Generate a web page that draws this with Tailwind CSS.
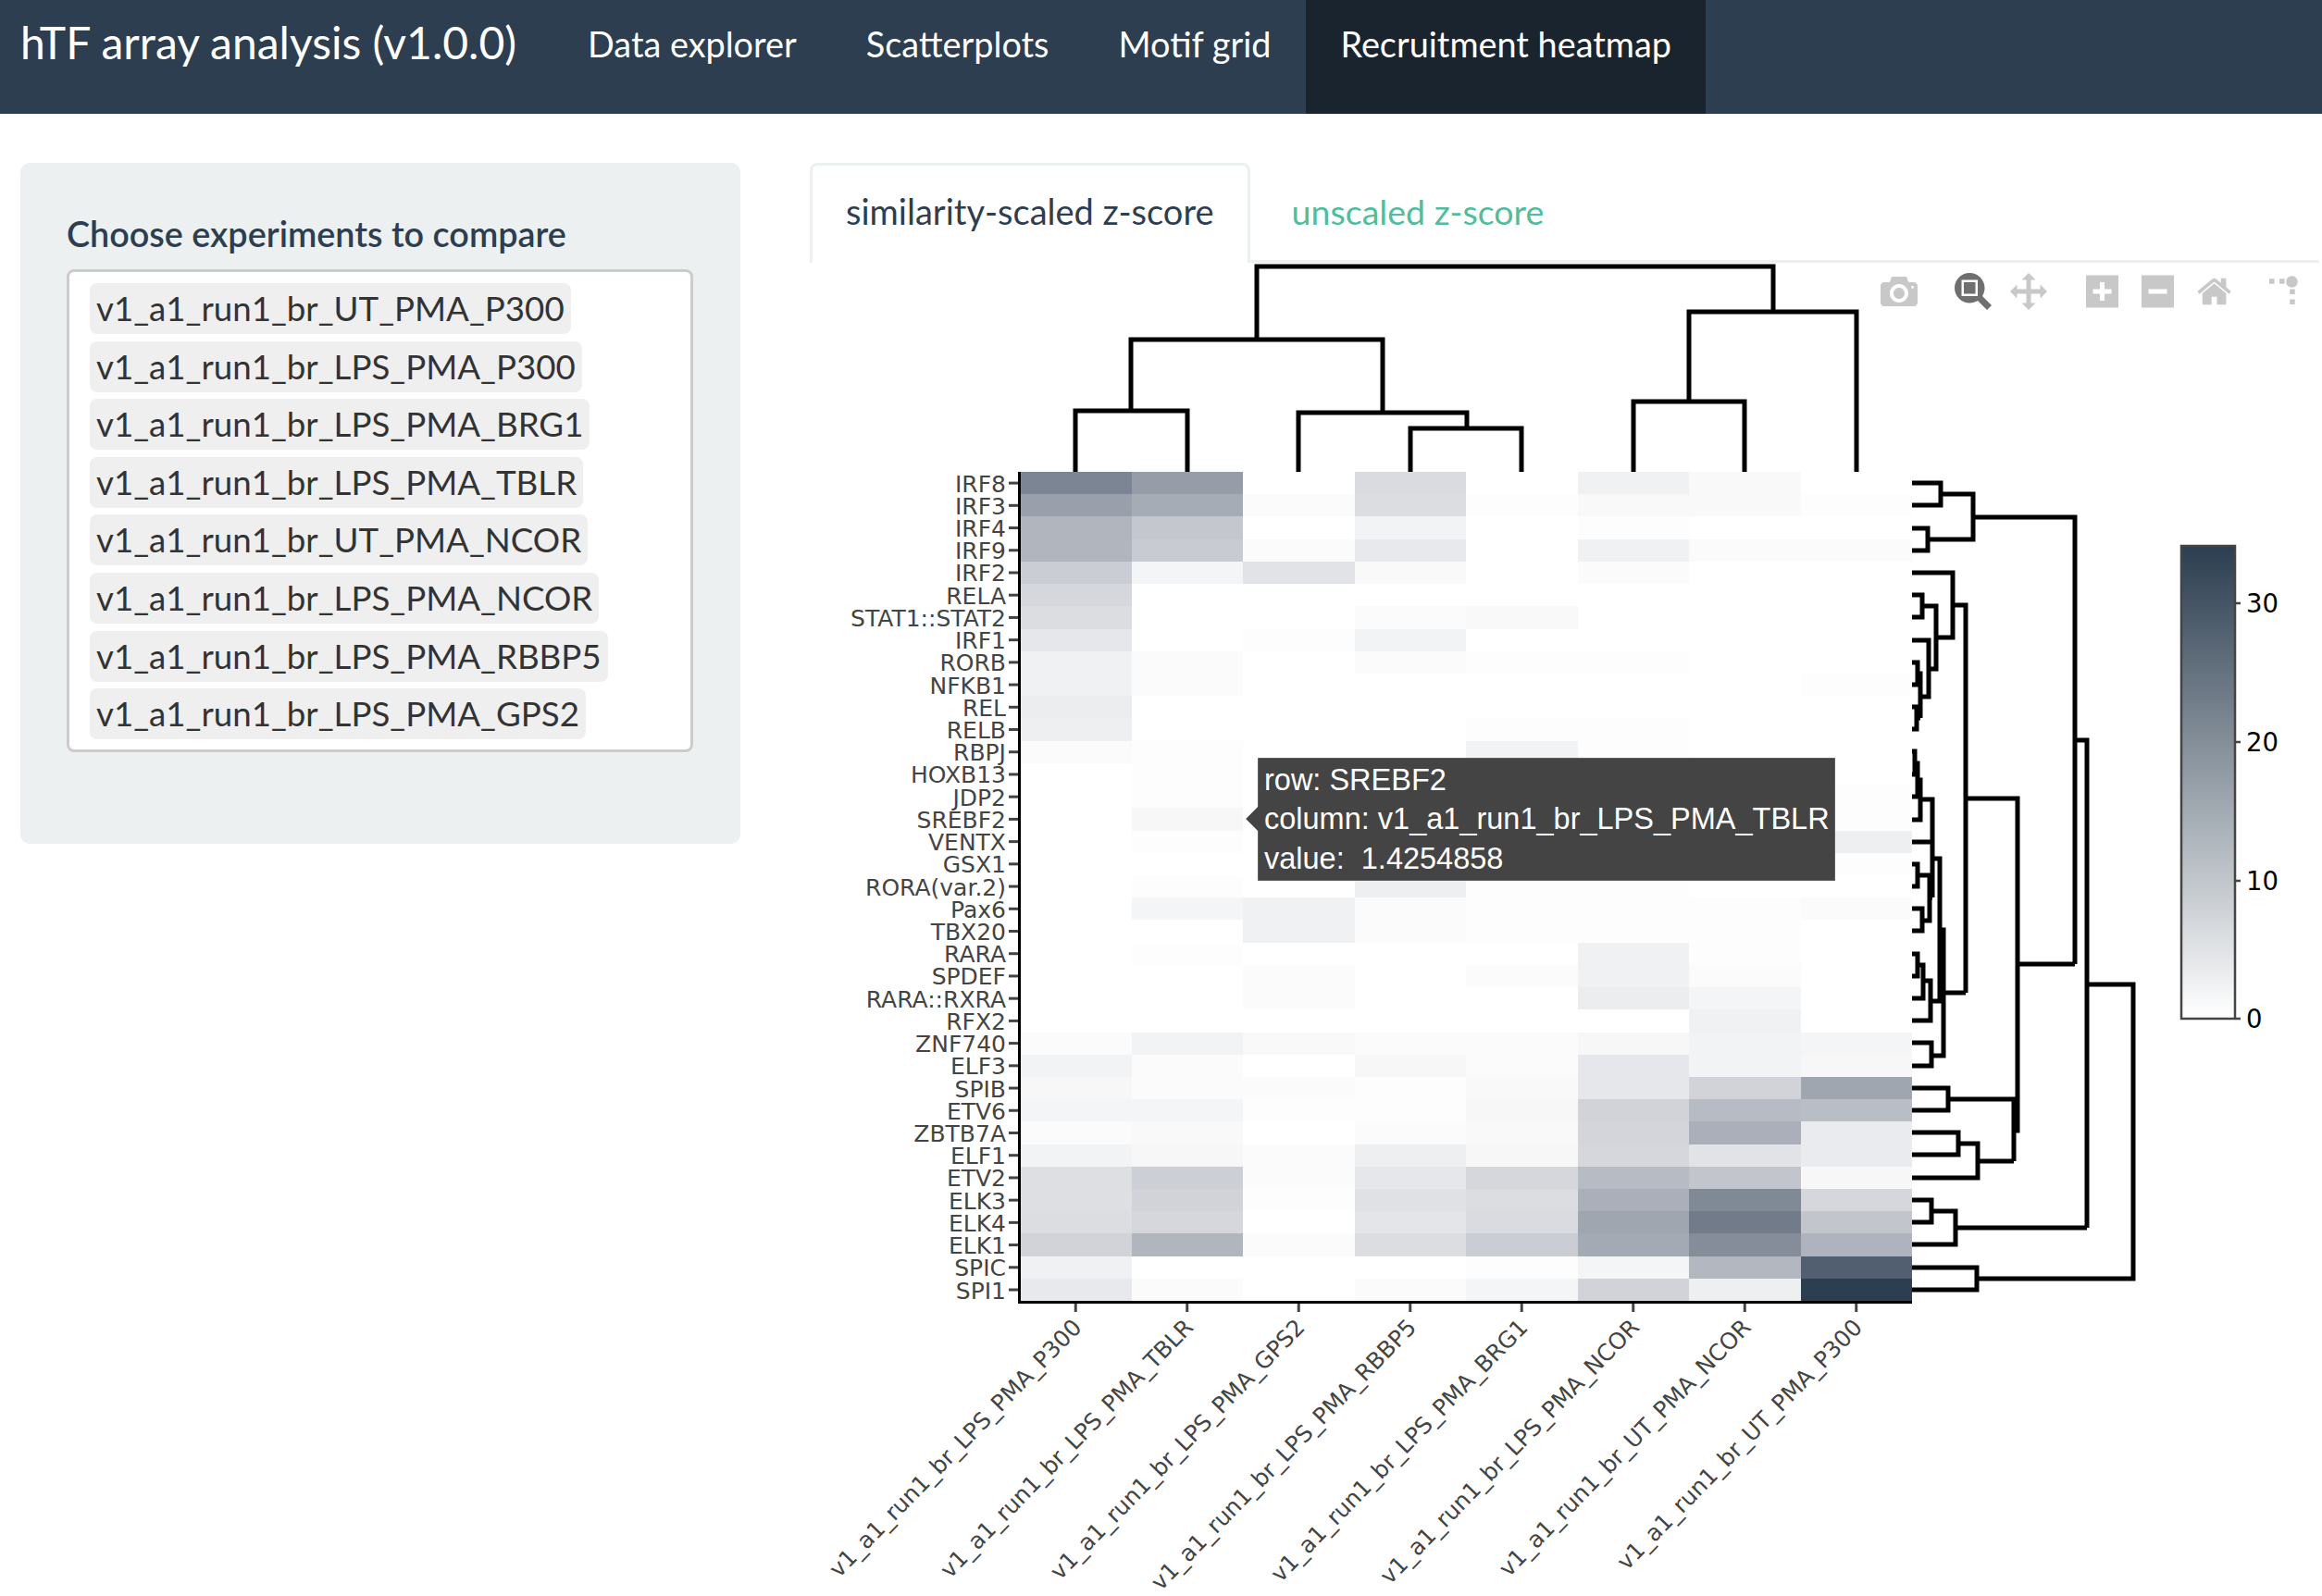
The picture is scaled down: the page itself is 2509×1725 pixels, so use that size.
<!DOCTYPE html>
<html lang="en">
<head>
    <meta charset="UTF-8">
    <meta name="viewport" content="width=device-width, initial-scale=1.0">
    <title>hTF array analysis</title>
    <script src="https://cdn.jsdelivr.net/npm/@tailwindcss/browser@4"></script>
</head>
<body class="h-screen overflow-hidden bg-white font-['Lato',sans-serif] text-[38px] leading-[53px] text-[#2c3e50]">
    <nav class="flex h-[123px] bg-[#2c3e50] text-[37.85px] text-white">
        <a class="pl-[22px] pr-[39.5px] pt-[18px] text-[48px] leading-[56px]">hTF array analysis (v1.0.0)</a>
        <a class="px-[37.5px] pt-[21px]">Data explorer</a>
        <a class="px-[37.5px] pt-[21px]">Scatterplots</a>
        <a class="px-[37.5px] pt-[21px]">Motif grid</a>
        <a class="bg-[#1a242f] px-[37.5px] pt-[21px]">Recruitment heatmap</a>
    </nav>

    <main class="flex pt-[53px]">
        <!-- sidebar -->
        <div class="ml-[22px] h-[736px] w-[778px] shrink-0 rounded-[10px] bg-[#ecf0f1] px-[50px] pt-[50px]">
            <p class="h-[65px] text-[37.75px] font-semibold">Choose experiments to compare</p>
            <div class="flex h-[522px] w-[677px] flex-col items-start gap-[7.6px] rounded-[8px] border-[3px] border-[#cccccc] bg-white pl-[22px] pt-[12px] text-[36.7px] text-[#333333]">
                <span class="h-[55px] rounded-[8px] bg-[#efefef] px-[7px] leading-[55px]">v1_a1_run1_br_UT_PMA_P300</span>
                <span class="h-[55px] rounded-[8px] bg-[#efefef] px-[7px] leading-[55px]">v1_a1_run1_br_LPS_PMA_P300</span>
                <span class="h-[55px] rounded-[8px] bg-[#efefef] px-[7px] leading-[55px]">v1_a1_run1_br_LPS_PMA_BRG1</span>
                <span class="h-[55px] rounded-[8px] bg-[#efefef] px-[7px] leading-[55px]">v1_a1_run1_br_LPS_PMA_TBLR</span>
                <span class="h-[55px] rounded-[8px] bg-[#efefef] px-[7px] leading-[55px]">v1_a1_run1_br_UT_PMA_NCOR</span>
                <span class="h-[55px] rounded-[8px] bg-[#efefef] px-[7px] leading-[55px]">v1_a1_run1_br_LPS_PMA_NCOR</span>
                <span class="h-[55px] rounded-[8px] bg-[#efefef] px-[7px] leading-[55px]">v1_a1_run1_br_LPS_PMA_RBBP5</span>
                <span class="h-[55px] rounded-[8px] bg-[#efefef] px-[7px] leading-[55px]">v1_a1_run1_br_LPS_PMA_GPS2</span>
            </div>
        </div>

        <!-- tabs + plot -->
        <div class="ml-[75px] w-[1634px] shrink-0">
            <div class="flex h-[108px] w-[1631px] border-b-[3px] border-[#ecf0f1]">
                <a class="-mb-[3px] h-[108px] rounded-t-[8px] border-x-[3px] border-t-[3px] border-[#ecf0f1] bg-white px-[36px] pt-[23px]">similarity-scaled z-score</a>
                <a class="px-[45px] pt-[26px] text-[37.6px] text-[#52bd9c]">unscaled z-score</a>
            </div>

            <!-- viewBox uses page coordinates -->
            <svg id="plot" class="block font-['DejaVu_Sans',sans-serif]" width="1634" height="1441" viewBox="875 284 1634 1441">
                <defs>
                    <linearGradient id="cb" x1="0" y1="0" x2="0" y2="1">
                        <stop offset="0" stop-color="#2c3e50"/>
                        <stop offset="1" stop-color="#ffffff"/>
                    </linearGradient>
                </defs>

                <g id="cells" shape-rendering="crispEdges"></g>

                <!-- axes -->
                <path d="M1101.5 510V1407.5H2066" fill="none" stroke="#000" stroke-width="3"/>
                <g id="xticks" stroke="#444" stroke-width="3"></g>
                <g id="yticks" stroke="#444" stroke-width="3"></g>
                <g id="ylabels" class="fill-[#444444] text-[25px]" text-anchor="end"></g>
                <g id="xlabels" class="fill-[#444444] text-[24.7px]" text-anchor="end"></g>

                <!-- column dendrogram -->
                <path fill="none" stroke="#000" stroke-width="5" d="M1358 367V288H1916V337
                    M1222 444V367H1494V446
                    M1162 510V444H1283V510
                    M1403 510V446H1585V463
                    M1524 510V463H1644V510
                    M1825 434V337H2006V510
                    M1765 510V434H1885V510"/>

                <!-- row dendrogram -->
                <path fill="none" stroke="#000" stroke-width="5" d="M2066 522H2097V546H2066
                    M2097 534H2132V583H2083
                    M2066 571H2083V595H2066
                    M2132 559H2242V1042
                    M2242 800H2255V1327
                    M2066 619H2110V689H2092
                    M2110 654H2124V1073
                    M2066 643H2077V667H2066
                    M2077 655H2092V723H2084
                    M2066 692H2084V753H2075
                    M2066 716H2072V740H2066
                    M2070 728H2075V776
                    M2066 764H2071V788H2066
                    M2071 776H2075
                    M2066 812H2069V837H2066
                    M2069 825H2072V861H2066
                    M2072 843H2075V864
                    M2066 886H2075V864H2088V970
                    M2066 910H2088
                    M2066 934H2072V958H2066
                    M2072 946H2085V995H2077
                    M2066 982H2077V1006H2066
                    M2085 970H2088
                    M2088 928H2096V1082H2086
                    M2096 1005H2100V1141H2087
                    M2066 1127H2087V1152H2066
                    M2100 1073H2124
                    M2066 1031H2072V1055H2066
                    M2072 1043H2078V1079H2066
                    M2078 1060H2086V1103H2066
                    M2066 1176H2105V1200H2066
                    M2105 1188H2176V1255
                    M2066 1224H2116V1248H2066
                    M2116 1236H2137V1273H2066
                    M2137 1255H2176
                    M2124 863H2180V1222H2176
                    M2180 1042H2242
                    M2066 1297H2087V1321H2066
                    M2087 1309H2113V1345H2066
                    M2113 1327H2255
                    M2255 1064H2305V1382H2136
                    M2066 1370H2136V1394H2066"/>

                <!-- colorbar -->
                <rect x="2357" y="590" width="58" height="511" fill="url(#cb)" stroke="#444" stroke-width="2.5"/>
                <path d="M2416 652H2421M2416 802H2421M2416 952H2421M2416 1101H2421" stroke="#444" stroke-width="2.5"/>
                <g class="fill-black text-[27.5px]">
                    <text x="2427" y="662">30</text>
                    <text x="2427" y="812">20</text>
                    <text x="2427" y="962">10</text>
                    <text x="2427" y="1111">0</text>
                </g>

                <!-- modebar -->
                <g fill="#c8c8c8">
                    <svg x="2032" y="295" width="40" height="40" viewBox="0 0 1000 1000"><path transform="matrix(1 0 0 -1 0 850)" d="m500 450c-83 0-150-67-150-150 0-83 67-150 150-150 83 0 150 67 150 150 0 83-67 150-150 150z m400 150h-120c-16 0-34 13-39 29l-31 93c-6 15-23 28-40 28h-340c-16 0-34-13-39-28l-31-94c-6-15-23-28-40-28h-120c-55 0-100-45-100-100v-450c0-55 45-100 100-100h800c55 0 100 45 100 100v450c0 55-45 100-100 100z m-400-550c-138 0-250 112-250 250 0 138 112 250 250 250 138 0 250-112 250-250 0-138-112-250-250-250z m365 380c-19 0-35 16-35 35 0 19 16 35 35 35 19 0 35-16 35-35 0-19-16-35-35-35z"/></svg>
                    <svg x="2112" y="295" width="40" height="40" viewBox="0 0 1000 1000"><path fill="#6f6f6f" transform="matrix(1 0 0 -1 0 850)" d="m1000-25l-250 251c40 63 63 138 63 218 0 224-182 406-407 406-224 0-406-182-406-406s183-406 407-406c80 0 155 22 218 62l250-250 125 125z m-812 250l0 438 437 0 0-438-437 0z m62 375l313 0 0-312-313 0 0 312z"/></svg>
                    <svg x="2172" y="295" width="40" height="40" viewBox="0 0 1000 1000"><path transform="matrix(1 0 0 -1 0 850)" d="m1000 350l-187 188 0-125-250 0 0 250 125 0-188 187-187-187 125 0 0-250-250 0 0 125-188-188 186-187 0 125 252 0 0-250-125 0 187-188 188 188-125 0 0 250 250 0 0-126 187 188z"/></svg>
                    <svg x="2254" y="295" width="40" height="40" viewBox="0 0 1000 1000"><path transform="matrix(1 0 0 -1 0 850)" d="m1 787l0-875 875 0 0 875-875 0z m687-500l-187 0 0-187-125 0 0 187-188 0 0 125 188 0 0 187 125 0 0-187 187 0 0-125z"/></svg>
                    <svg x="2314" y="295" width="40" height="40" viewBox="0 0 1000 1000"><path transform="matrix(1 0 0 -1 0 850)" d="m0 788l0-876 875 0 0 876-875 0z m688-500l-500 0 0 125 500 0 0-125z"/></svg>
                    <svg x="2374" y="295" width="40" height="40" viewBox="0 0 1000 1000"><path transform="matrix(1 0 0 -1 0 850)" d="m786 296v-267q0-15-11-26t-25-10h-214v214h-143v-214h-214q-15 0-25 10t-11 26v267q0 1 0 2t0 2l321 264 321-264q1-1 1-4z m124 39l-34-41q-5-5-12-6h-2q-7 0-12 3l-386 322-386-322q-7-4-13-4-7 2-12 7l-35 41q-4 5-3 13t6 12l401 334q18 15 42 15t43-15l136-114v109q0 8 5 13t13 5h107q8 0 13-5t5-13v-227l122-102q5-5 6-12t-4-13z"/></svg>
                    <svg x="2452" y="295" width="40" height="40" viewBox="0 0 1000 1000"><path transform="matrix(1.5 0 0 -1.5 0 850)" d="M512 409c0-57-46-104-103-104-57 0-104 47-104 104 0 57 47 103 104 103 57 0 103-46 103-103z m-327-39l92 0 0 92-92 0 0-92z m-185 0l92 0 0 92-92 0 0-92z m370-186l92 0 0 93-92 0 0-93z m0-184l92 0 0 92-92 0 0-92z"/></svg>
                </g>

                <!-- hover label -->
                <path d="M1346 885L1359 872V819H1983V952H1359V898Z" fill="#444444" stroke="#ffffff" stroke-opacity="0.3"/>
                <g class="fill-white font-['Liberation_Sans',sans-serif] text-[32.5px]">
                    <text x="1366" y="854">row: SREBF2</text>
                    <text x="1366" y="896">column: v1_a1_run1_br_LPS_PMA_TBLR</text>
                    <text x="1366" y="939" xml:space="preserve">value:  1.4254858</text>
                </g>
            </svg>
        </div>
    </main>

<script>
const NS = "http://www.w3.org/2000/svg";

const rows = ["IRF8","IRF3","IRF4","IRF9","IRF2","RELA","STAT1::STAT2","IRF1","RORB","NFKB1","REL","RELB","RBPJ","HOXB13","JDP2","SREBF2","VENTX","GSX1","RORA(var.2)","Pax6","TBX20","RARA","SPDEF","RARA::RXRA","RFX2","ZNF740","ELF3","SPIB","ETV6","ZBTB7A","ELF1","ETV2","ELK3","ELK4","ELK1","SPIC","SPI1"];
const cols = ["v1_a1_run1_br_LPS_PMA_P300","v1_a1_run1_br_LPS_PMA_TBLR","v1_a1_run1_br_LPS_PMA_GPS2","v1_a1_run1_br_LPS_PMA_RBBP5","v1_a1_run1_br_LPS_PMA_BRG1","v1_a1_run1_br_LPS_PMA_NCOR","v1_a1_run1_br_UT_PMA_NCOR","v1_a1_run1_br_UT_PMA_P300"];

// share of the dark end of the colour scale, in percent
const values = [
    [62,50,0,18,0,7,3,0],
    [48,42,2,17,1,3,3,1],
    [37,28,0,6,0,1,0,0],
    [37,26,2,11,0,7,2,2],
    [25,5,14,3,0,2,0,0],
    [20,0,0,0,0,0,0,0],
    [17,0,0,2,3,0,0,0],
    [12,0,1,6,0,0,0,0],
    [7,2,0,2,1,1,0,0],
    [7,2,0,0,0,0,0,1],
    [9,0,0,0,0,0,0,0],
    [8,0,0,0,1,1,0,0],
    [2,1,0,0,6,1,0,0],
    [0,1,0,0,0,0,0,0],
    [0,1,0,0,0,0,0,1],
    [0,4,0,0,0,0,0,1],
    [0,1,0,0,0,0,0,8],
    [0,0,0,0,0,0,0,1],
    [0,1,0,8,1,1,0,0],
    [0,5,7,2,1,1,1,2],
    [0,0,7,2,1,1,1,0],
    [0,1,0,0,0,7,1,0],
    [0,0,2,0,2,7,2,0],
    [0,0,2,0,0,9,5,0],
    [0,0,0,0,0,0,7,0],
    [2,6,3,2,2,4,6,5],
    [6,2,0,4,2,12,6,4],
    [4,2,2,1,3,12,22,45],
    [5,5,1,1,4,22,34,33],
    [2,3,0,2,3,21,40,10],
    [6,4,2,8,4,20,14,10],
    [16,24,2,12,20,34,29,4],
    [16,22,1,15,17,40,60,20],
    [17,20,0,13,18,45,67,29],
    [22,37,2,17,25,43,58,38],
    [7,0,0,0,1,5,36,82],
    [11,2,0,2,5,22,8,100]
];

const left = 1102, top0 = 510, cw = 120.5, rh = 24.22;

function add(parent, tag, attrs, text) {
    const el = document.createElementNS(NS, tag);
    for (const k in attrs) el.setAttribute(k, attrs[k]);
    if (text) el.textContent = text;
    document.getElementById(parent).appendChild(el);
}

values.forEach(function(row, r) {
    const y0 = Math.round(top0 + r * rh), y1 = Math.round(top0 + (r + 1) * rh);
    row.forEach(function(v, c) {
        const x0 = Math.round(left + c * cw), x1 = Math.round(left + (c + 1) * cw);
        const a = v / 100;
        // the mid greys of the scale are a little more neutral than a straight blend
        const fill = "rgb(" + Math.round(255 - 211 * a) + "," + Math.round(255 - 193 * a - 10 * a * (1 - a)) + "," + Math.round(255 - 175 * a) + ")";
        add("cells", "rect", {x: x0, y: y0, width: x1 - x0, height: y1 - y0, fill: fill});
    });
    const cy = top0 + (r + 0.5) * rh;
    add("yticks", "line", {x1: 1090, x2: 1100, y1: cy, y2: cy});
    add("ylabels", "text", {x: 1087, y: cy + 9.5}, rows[r]);
});

cols.forEach(function(name, c) {
    const cx = left + (c + 0.5) * cw;
    add("xticks", "line", {x1: cx, x2: cx, y1: 1409, y2: 1418});
    add("xlabels", "text", {x: cx + 8, y: 1436, transform: "rotate(-45.7 " + (cx + 8) + " 1436)"}, name);
});
</script>
</body>
</html>
